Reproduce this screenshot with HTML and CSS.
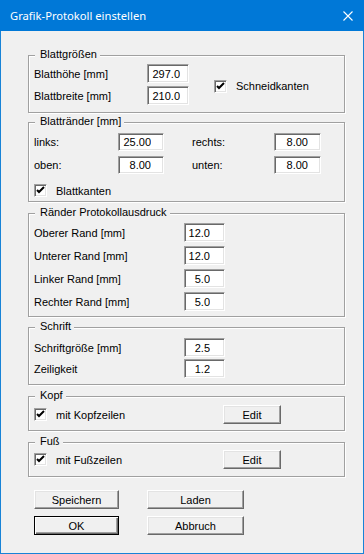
FILE: index.html
```html
<!DOCTYPE html>
<html lang="de">
<head>
    <meta charset="UTF-8">
    <meta name="viewport" content="width=device-width, initial-scale=1.0">
    <title>Grafik-Protokoll einstellen</title>
    <link rel="stylesheet" href="styles.css">
</head>
<body>
    <div class="window">
        <div class="titlebar">
            <span class="title">Grafik-Protokoll einstellen</span>
            <svg class="close" width="10" height="10" viewBox="0 0 10 10">
                <path d="M0.5 0.5 L9.5 9.5 M9.5 0.5 L0.5 9.5" stroke="#fff" stroke-width="1.1" fill="none"/>
            </svg>
        </div>

        <div class="content">
            <!-- Blattgrößen -->
            <div class="group g-size">
                <span class="legend">Blattgrößen</span>
                <div class="size-grid">
                    <span class="lbl">Blatthöhe [mm]</span>
                    <input class="field pad-a" type="text" value="297.0">
                    <label class="check size-check">
                        <span class="box"><svg width="9" height="9" viewBox="0 0 9 9"><path d="M1 4 L3 6 L8 1" stroke="#000" stroke-width="2" fill="none"/></svg></span>
                        <span>Schneidkanten</span>
                    </label>
                    <span class="lbl">Blattbreite [mm]</span>
                    <input class="field pad-a" type="text" value="210.0">
                </div>
            </div>

            <!-- Blattränder -->
            <div class="group g-margins">
                <span class="legend">Blattränder [mm]</span>
                <div class="margin-grid">
                    <span class="lbl">links:</span>
                    <input class="field pad-b" type="text" value="25.00">
                    <span></span>
                    <span class="lbl">rechts:</span>
                    <input class="field pad-b" type="text" value="8.00">
                    <span class="lbl">oben:</span>
                    <input class="field pad-b" type="text" value="8.00">
                    <span></span>
                    <span class="lbl">unten:</span>
                    <input class="field pad-b" type="text" value="8.00">
                </div>
                <label class="check edge-check">
                    <span class="box"><svg width="9" height="9" viewBox="0 0 9 9"><path d="M1 4 L3 6 L8 1" stroke="#000" stroke-width="2" fill="none"/></svg></span>
                    <span>Blattkanten</span>
                </label>
            </div>

            <!-- Ränder Protokollausdruck -->
            <div class="group g-print">
                <span class="legend">Ränder Protokollausdruck</span>
                <div class="print-grid">
                    <span class="lbl">Oberer Rand [mm]</span>
                    <input class="field pad-c" type="text" value="12.0">
                    <span class="lbl">Unterer Rand [mm]</span>
                    <input class="field pad-c" type="text" value="12.0">
                    <span class="lbl">Linker Rand [mm]</span>
                    <input class="field pad-c" type="text" value="5.0">
                    <span class="lbl">Rechter Rand [mm]</span>
                    <input class="field pad-c" type="text" value="5.0">
                </div>
            </div>

            <!-- Schrift -->
            <div class="group g-font">
                <span class="legend">Schrift</span>
                <div class="font-grid">
                    <span class="lbl">Schriftgröße [mm]</span>
                    <input class="field pad-c" type="text" value="2.5">
                    <span class="lbl">Zeiligkeit</span>
                    <input class="field pad-c" type="text" value="1.2">
                </div>
            </div>

            <!-- Kopf -->
            <div class="group g-head">
                <span class="legend">Kopf</span>
                <div class="line-row">
                    <label class="check">
                        <span class="box"><svg width="9" height="9" viewBox="0 0 9 9"><path d="M1 4 L3 6 L8 1" stroke="#000" stroke-width="2" fill="none"/></svg></span>
                        <span>mit Kopfzeilen</span>
                    </label>
                    <button class="btn edit-btn">Edit</button>
                </div>
            </div>

            <!-- Fuß -->
            <div class="group g-foot">
                <span class="legend">Fuß</span>
                <div class="line-row">
                    <label class="check">
                        <span class="box"><svg width="9" height="9" viewBox="0 0 9 9"><path d="M1 4 L3 6 L8 1" stroke="#000" stroke-width="2" fill="none"/></svg></span>
                        <span>mit Fußzeilen</span>
                    </label>
                    <button class="btn edit-btn">Edit</button>
                </div>
            </div>

            <div class="button-grid">
                <button class="btn">Speichern</button>
                <button class="btn">Laden</button>
                <button class="btn default-btn">OK</button>
                <button class="btn">Abbruch</button>
            </div>
        </div>
    </div>
</body>
</html>
```

FILE: styles.css
```css
* {
    margin: 0;
    padding: 0;
    box-sizing: border-box;
}

body {
    background: #f0f0f0;
    font-family: 'Liberation Sans', Arial, sans-serif;
    font-size: 11px;
    color: #000;
}

.window {
    width: 364px;
    height: 554px;
    border: 1px solid #1883d7;
    border-top: 0;
    background: #f0f0f0;
}

.titlebar {
    height: 31px;
    margin: 0 -1px;
    background: #0078d7;
    color: #fff;
    display: flex;
    align-items: center;
    justify-content: space-between;
    padding: 0 11px 1px 10px;
}

.title {
    font-family: 'Noto Sans', 'Liberation Sans', sans-serif;
    font-size: 11.2px;
}

.close {
    display: block;
    margin-top: 1px;
}

.content {
    padding: 24px 0 0 27px;
}

/* etched group frame */
.group {
    position: relative;
    width: 317px;
    border: 1px solid #a0a0a0;
    box-shadow: 1px 1px 0 #fff, inset 1px 1px 0 #fff;
    padding-left: 5px;
}

.legend {
    position: absolute;
    top: -8px;
    left: 6px;
    line-height: 13px;
    padding: 0 3px 0 5px;
    background: #f0f0f0;
}

.g-size { height: 58px; padding-top: 8px; }
.g-margins { height: 80px; margin-top: 9px; padding-top: 10px; }
.g-print { height: 104px; margin-top: 11px; padding-top: 9px; }
.g-font { height: 58px; margin-top: 10px; padding-top: 10px; }
.g-head { height: 35px; margin-top: 11px; padding-top: 8px; }
.g-foot { height: 35px; margin-top: 11px; padding-top: 7px; }

.lbl {
    display: flex;
    align-items: center;
    white-space: nowrap;
}

.field {
    display: block;
    width: 100%;
    height: 100%;
    font: inherit;
    color: #000;
    background: #fff;
    border: 1px solid;
    border-color: #a0a0a0 #fff #fff #a0a0a0;
    box-shadow: inset 1px 1px 0 #696969, inset -1px -1px 0 #e3e3e3;
    text-align: right;
    outline: none;
}

.pad-a { padding-right: 8px; }
.pad-b { padding-right: 12px; }
.pad-c { padding-right: 14px; }

.size-grid {
    display: grid;
    grid-template-columns: 113px 42px auto;
    grid-auto-rows: 19px;
    row-gap: 3px;
}

.size-check {
    grid-column: 3;
    grid-row: 1 / span 2;
    margin-left: 25px;
    align-self: center;
    margin-top: 3px;
}

.margin-grid {
    display: grid;
    grid-template-columns: 84px 46px 28px 82px 47px;
    grid-auto-rows: 18px;
    row-gap: 5px;
}

.edge-check {
    margin-top: 10px;
}

.print-grid,
.font-grid {
    display: grid;
    grid-template-columns: 150px 41px;
    grid-auto-rows: 19px;
    row-gap: 4px;
}

.font-grid {
    row-gap: 2px;
}

.check {
    display: flex;
    align-items: center;
    gap: 9px;
    white-space: nowrap;
}

.box {
    width: 13px;
    height: 13px;
    flex: none;
    display: flex;
    align-items: center;
    justify-content: center;
    background: #fff;
    border: 1px solid;
    border-color: #a0a0a0 #fff #fff #a0a0a0;
    box-shadow: inset 1px 1px 0 #696969, inset -1px -1px 0 #e3e3e3;
}

.line-row {
    display: grid;
    grid-template-columns: 189px 58px;
    grid-auto-rows: 19px;
}

.btn {
    display: block;
    font: inherit;
    color: #000;
    background: #f0f0f0;
    border: 1px solid;
    border-color: #fff #696969 #696969 #fff;
    box-shadow: inset -1px -1px 0 #a0a0a0, inset 1px 1px 0 #e3e3e3;
    height: 19px;
    cursor: pointer;
}

.default-btn {
    border-color: #000;
    box-shadow: inset 1px 1px 0 #fff, inset -1px -1px 0 #696969, inset -2px -2px 0 #a0a0a0;
}

.button-grid {
    display: grid;
    grid-template-columns: 85px 97px;
    grid-auto-rows: 19px;
    column-gap: 28px;
    row-gap: 7px;
    margin: 13px 0 0 6px;
}
```
